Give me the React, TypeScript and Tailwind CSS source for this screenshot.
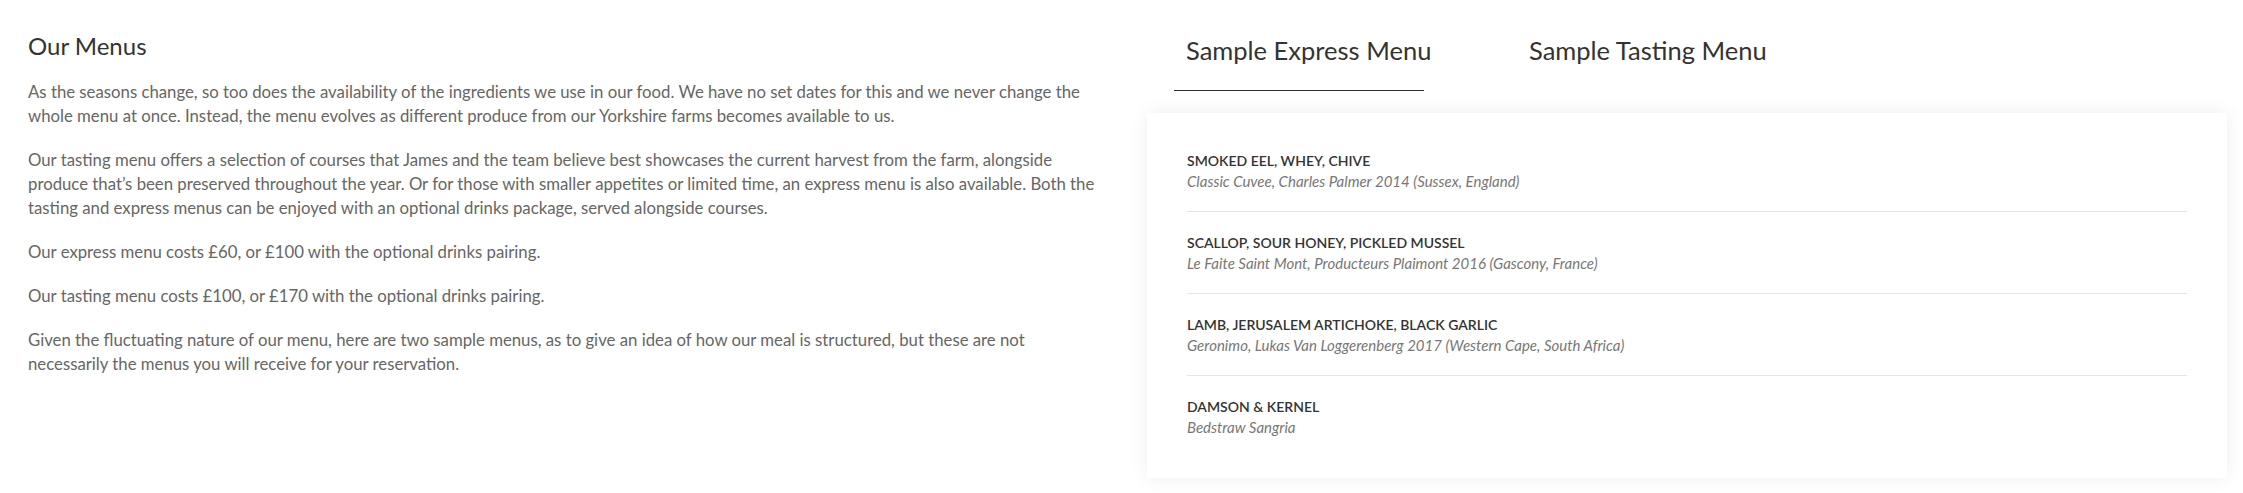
import React, { useState } from 'react';

const paragraphs = [
  'As the seasons change, so too does the availability of the ingredients we use in our food. We have no set dates for this and we never change the whole menu at once. Instead, the menu evolves as different produce from our Yorkshire farms becomes available to us.',
  'Our tasting menu offers a selection of courses that James and the team believe best showcases the current harvest from the farm, alongside produce that’s been preserved throughout the year. Or for those with smaller appetites or limited time, an express menu is also available. Both the tasting and express menus can be enjoyed with an optional drinks package, served alongside courses.',
  'Our express menu costs £60, or £100 with the optional drinks pairing.',
  'Our tasting menu costs £100, or £170 with the optional drinks pairing.',
  'Given the fluctuating nature of our menu, here are two sample menus, as to give an idea of how our meal is structured, but these are not necessarily the menus you will receive for your reservation.',
];

const expressMenu = [
  { dish: 'SMOKED EEL, WHEY, CHIVE', drink: 'Classic Cuvee, Charles Palmer 2014 (Sussex, England)' },
  { dish: 'SCALLOP, SOUR HONEY, PICKLED MUSSEL', drink: 'Le Faite Saint Mont, Producteurs Plaimont 2016 (Gascony, France)' },
  { dish: 'LAMB, JERUSALEM ARTICHOKE, BLACK GARLIC', drink: 'Geronimo, Lukas Van Loggerenberg 2017 (Western Cape, South Africa)' },
  { dish: 'DAMSON & KERNEL', drink: 'Bedstraw Sangria' },
];

const tabs = ['Sample Express Menu', 'Sample Tasting Menu'];

export default function App() {
  const [active, setActive] = useState(0);

  return (
    <div className="flex w-[2243px] h-[493px] bg-white font-['Lato',sans-serif]">
      {/* intro copy */}
      <div className="w-[1147px] shrink-0 pl-[28px] pt-[30px]">
        <h2 className="text-[24px] leading-[32px] text-[#333] mb-[18px]">Our Menus</h2>
        <div className="w-[1075px] text-[16.75px] leading-[24px] text-[#666] space-y-[20px]">
          {paragraphs.map((p, i) => (
            <p key={i}>{p}</p>
          ))}
        </div>
      </div>

      {/* sample menus */}
      <div className="w-[1080px] shrink-0 pt-[34px]">
        <div className="flex gap-[93px] ml-[27px]">
          {tabs.map((t, i) => (
            <button
              key={t}
              onClick={() => setActive(i)}
              className={`w-[250px] pl-[12px] pb-[24px] text-left text-[25.5px] leading-[32px] text-[#333] whitespace-nowrap border-b ${
                active === i ? 'border-[#333]' : 'border-transparent'
              }`}
            >
              {t}
            </button>
          ))}
        </div>

        <div className="mt-[22px] bg-white shadow-[0_0_18px_rgba(0,0,0,0.07)] px-[40px] pt-[37px] pb-[40px]">
          {expressMenu.map((item, i) => (
            <div
              key={item.dish}
              className={`${i > 0 ? 'pt-[20px]' : ''} ${
                i < expressMenu.length - 1 ? 'pb-[19px] border-b border-[#e5e5e5]' : ''
              }`}
            >
              <div className="text-[14px] leading-[21px] font-semibold text-[#333]">{item.dish}</div>
              <div className="text-[15px] leading-[21px] italic text-[#777]">{item.drink}</div>
            </div>
          ))}
        </div>
      </div>
    </div>
  );
}
